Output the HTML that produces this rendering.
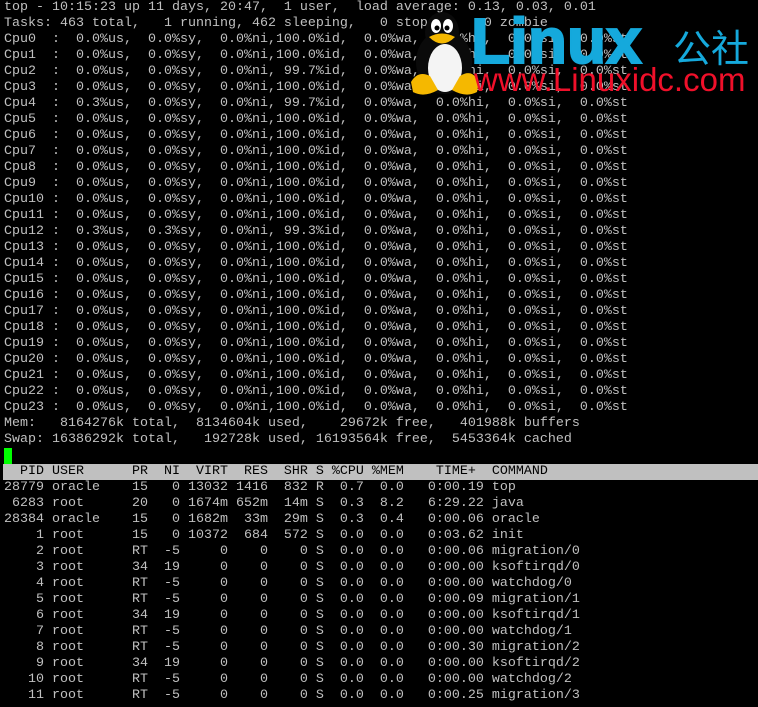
<!DOCTYPE html>
<html><head><meta charset="utf-8"><style>
html,body{margin:0;padding:0;background:#000;width:758px;height:707px;overflow:hidden}
pre{margin:0;position:absolute;left:4px;top:0;font-family:"Liberation Mono",monospace;font-size:13.33px;line-height:16px;color:#c0c0c0;white-space:pre}
.hd{position:absolute;left:3px;top:464px;width:755px;height:16px;background:#c0c0c0}
.cur{position:absolute;left:4px;top:448px;width:8px;height:16px;background:#00ff00}
.hdt{color:#000}
.lx{position:absolute;left:471px;top:9px;font:bold 64px/1 "Liberation Sans",sans-serif;color:#15a9dc;letter-spacing:0px;-webkit-text-stroke:2px #15a9dc}
.gs{position:absolute;left:673px;top:24px;font:38px/44px "Noto Sans CJK SC",sans-serif;color:#15a9dc}
.url{position:absolute;left:474px;top:63px;font:33px/1 "Liberation Sans",sans-serif;color:#f0102a}
</style></head><body>
<div class="hd"></div><div class="cur"></div>
<pre>top - 10:15:23 up 11 days, 20:47,  1 user,  load average: 0.13, 0.03, 0.01
Tasks: 463 total,   1 running, 462 sleeping,   0 stopped,   0 zombie
Cpu0  :  0.0%us,  0.0%sy,  0.0%ni,100.0%id,  0.0%wa,  0.0%hi,  0.0%si,  0.0%st
Cpu1  :  0.0%us,  0.0%sy,  0.0%ni,100.0%id,  0.0%wa,  0.0%hi,  0.0%si,  0.0%st
Cpu2  :  0.0%us,  0.0%sy,  0.0%ni, 99.7%id,  0.0%wa,  0.0%hi,  0.0%si,  0.0%st
Cpu3  :  0.0%us,  0.0%sy,  0.0%ni,100.0%id,  0.0%wa,  0.0%hi,  0.0%si,  0.0%st
Cpu4  :  0.3%us,  0.0%sy,  0.0%ni, 99.7%id,  0.0%wa,  0.0%hi,  0.0%si,  0.0%st
Cpu5  :  0.0%us,  0.0%sy,  0.0%ni,100.0%id,  0.0%wa,  0.0%hi,  0.0%si,  0.0%st
Cpu6  :  0.0%us,  0.0%sy,  0.0%ni,100.0%id,  0.0%wa,  0.0%hi,  0.0%si,  0.0%st
Cpu7  :  0.0%us,  0.0%sy,  0.0%ni,100.0%id,  0.0%wa,  0.0%hi,  0.0%si,  0.0%st
Cpu8  :  0.0%us,  0.0%sy,  0.0%ni,100.0%id,  0.0%wa,  0.0%hi,  0.0%si,  0.0%st
Cpu9  :  0.0%us,  0.0%sy,  0.0%ni,100.0%id,  0.0%wa,  0.0%hi,  0.0%si,  0.0%st
Cpu10 :  0.0%us,  0.0%sy,  0.0%ni,100.0%id,  0.0%wa,  0.0%hi,  0.0%si,  0.0%st
Cpu11 :  0.0%us,  0.0%sy,  0.0%ni,100.0%id,  0.0%wa,  0.0%hi,  0.0%si,  0.0%st
Cpu12 :  0.3%us,  0.3%sy,  0.0%ni, 99.3%id,  0.0%wa,  0.0%hi,  0.0%si,  0.0%st
Cpu13 :  0.0%us,  0.0%sy,  0.0%ni,100.0%id,  0.0%wa,  0.0%hi,  0.0%si,  0.0%st
Cpu14 :  0.0%us,  0.0%sy,  0.0%ni,100.0%id,  0.0%wa,  0.0%hi,  0.0%si,  0.0%st
Cpu15 :  0.0%us,  0.0%sy,  0.0%ni,100.0%id,  0.0%wa,  0.0%hi,  0.0%si,  0.0%st
Cpu16 :  0.0%us,  0.0%sy,  0.0%ni,100.0%id,  0.0%wa,  0.0%hi,  0.0%si,  0.0%st
Cpu17 :  0.0%us,  0.0%sy,  0.0%ni,100.0%id,  0.0%wa,  0.0%hi,  0.0%si,  0.0%st
Cpu18 :  0.0%us,  0.0%sy,  0.0%ni,100.0%id,  0.0%wa,  0.0%hi,  0.0%si,  0.0%st
Cpu19 :  0.0%us,  0.0%sy,  0.0%ni,100.0%id,  0.0%wa,  0.0%hi,  0.0%si,  0.0%st
Cpu20 :  0.0%us,  0.0%sy,  0.0%ni,100.0%id,  0.0%wa,  0.0%hi,  0.0%si,  0.0%st
Cpu21 :  0.0%us,  0.0%sy,  0.0%ni,100.0%id,  0.0%wa,  0.0%hi,  0.0%si,  0.0%st
Cpu22 :  0.0%us,  0.0%sy,  0.0%ni,100.0%id,  0.0%wa,  0.0%hi,  0.0%si,  0.0%st
Cpu23 :  0.0%us,  0.0%sy,  0.0%ni,100.0%id,  0.0%wa,  0.0%hi,  0.0%si,  0.0%st
Mem:   8164276k total,  8134604k used,    29672k free,   401988k buffers
Swap: 16386292k total,   192728k used, 16193564k free,  5453364k cached

<span class="hdt">  PID USER      PR  NI  VIRT  RES  SHR S %CPU %MEM    TIME+  COMMAND</span>
28779 oracle    15   0 13032 1416  832 R  0.7  0.0   0:00.19 top
 6283 root      20   0 1674m 652m  14m S  0.3  8.2   6:29.22 java
28384 oracle    15   0 1682m  33m  29m S  0.3  0.4   0:00.06 oracle
    1 root      15   0 10372  684  572 S  0.0  0.0   0:03.62 init
    2 root      RT  -5     0    0    0 S  0.0  0.0   0:00.06 migration/0
    3 root      34  19     0    0    0 S  0.0  0.0   0:00.00 ksoftirqd/0
    4 root      RT  -5     0    0    0 S  0.0  0.0   0:00.00 watchdog/0
    5 root      RT  -5     0    0    0 S  0.0  0.0   0:00.09 migration/1
    6 root      34  19     0    0    0 S  0.0  0.0   0:00.00 ksoftirqd/1
    7 root      RT  -5     0    0    0 S  0.0  0.0   0:00.00 watchdog/1
    8 root      RT  -5     0    0    0 S  0.0  0.0   0:00.30 migration/2
    9 root      34  19     0    0    0 S  0.0  0.0   0:00.00 ksoftirqd/2
   10 root      RT  -5     0    0    0 S  0.0  0.0   0:00.00 watchdog/2
   11 root      RT  -5     0    0    0 S  0.0  0.0   0:00.25 migration/3</pre>
<svg style="position:absolute;left:410px;top:8px" width="70" height="88" viewBox="0 0 70 88">
<ellipse cx="34" cy="54" rx="28" ry="32" fill="#0a0a0a"/>
<ellipse cx="32" cy="24" rx="17" ry="20" fill="#0a0a0a"/>
<ellipse cx="35" cy="60" rx="17" ry="24" fill="#f4f4f4"/>
<ellipse cx="26" cy="18" rx="5" ry="7" fill="#fff"/><ellipse cx="38" cy="18" rx="5" ry="7" fill="#fff"/>
<circle cx="27" cy="20" r="2.5" fill="#000"/><circle cx="37" cy="20" r="2.5" fill="#000"/>
<path d="M19 29 Q32 22 45 29 Q32 42 19 29Z" fill="#f5b800"/>
<path d="M1 74 Q8 62 20 68 L28 82 Q14 90 3 84Z" fill="#f5b800"/>
<path d="M69 74 Q62 60 50 68 L42 82 Q56 90 67 84Z" fill="#f5b800"/>
</svg>
<div class="lx">Linux</div>
<div class="gs">公社</div>
<div class="url">www.Linuxidc.com</div>
</body></html>
